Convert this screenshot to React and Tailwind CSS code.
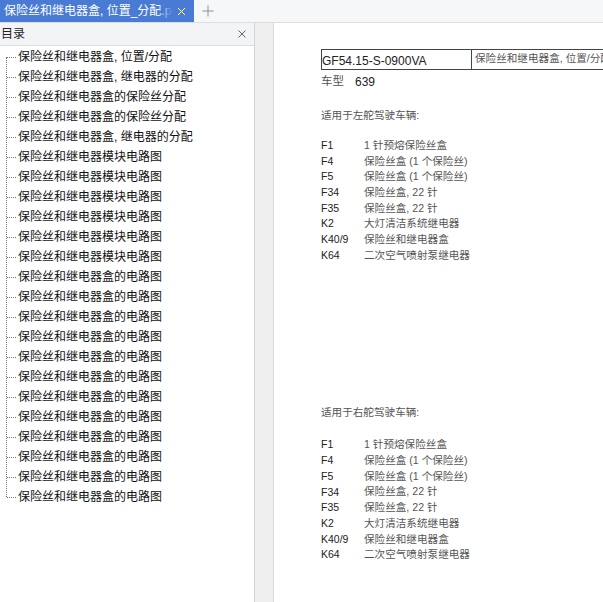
const FONT = "font-['Liberation_Sans','Noto_Sans_CJK_SC',sans-serif]";
const PAGE = "font-['Liberation_Sans','Noto_Sans_CJK_SC',serif]";

const toc = [
  "保险丝和继电器盒, 位置/分配",
  "保险丝和继电器盒, 继电器的分配",
  "保险丝和继电器盒的保险丝分配",
  "保险丝和继电器盒的保险丝分配",
  "保险丝和继电器盒, 继电器的分配",
  ...Array(6).fill("保险丝和继电器模块电路图"),
  ...Array(12).fill("保险丝和继电器盒的电路图"),
];

const rows = [
  ["F1", "1 针预熔保险丝盒"],
  ["F4", "保险丝盒 (1 个保险丝)"],
  ["F5", "保险丝盒 (1 个保险丝)"],
  ["F34", "保险丝盒, 22 针"],
  ["F35", "保险丝盒, 22 针"],
  ["K2", "大灯清洁系统继电器"],
  ["K40/9", "保险丝和继电器盒"],
  ["K64", "二次空气喷射泵继电器"],
];

function Fuses({ title, top, gap }) {
  return (
    <div className={top}>
      <div className="text-[10.6px] leading-[14px] text-[#555]">{title}</div>
      <div className={gap}>
        {rows.map(([a, b]) => (
          <div key={a} className="flex h-[15.7px] items-center">
            <span className="w-[43px] text-[10.5px] text-[#222]">{a}</span>
            <span className="text-[10.6px] text-[#555]">{b}</span>
          </div>
        ))}
      </div>
    </div>
  );
}

export default function App() {
  return (
    <div className={`flex h-[602px] w-[603px] flex-col overflow-hidden bg-white ${FONT}`}>
      <div className="flex h-[23px] shrink-0 items-stretch border-b border-[#dcdee2] bg-[#f6f7f9]">
        <div className="relative flex w-[194px] items-center overflow-hidden bg-[#4a7bd4] pl-1 text-[12px] whitespace-nowrap text-white">
          保险丝和继电器盒, 位置_分配.pdf
          <div className="absolute inset-y-0 right-0 flex w-[36px] items-center justify-end bg-gradient-to-r from-transparent to-[#4a7bd4] to-40% pr-[8px]">
            <svg width="9" height="9" viewBox="0 0 9 9" stroke="white" strokeWidth="1"><path d="M1 1l7 7M8 1l-7 7" /></svg>
          </div>
        </div>
        <div className="flex w-[27px] items-center justify-center">
          <svg width="12" height="12" viewBox="0 0 12 12" stroke="#8f8f8f" strokeWidth="1"><path d="M6 0.5v11M0.5 6h11" /></svg>
        </div>
      </div>
      <div className="flex min-h-0 flex-1">
        <aside className="flex w-[255px] shrink-0 flex-col border-r border-[#d4d4d4]">
          <div className="flex h-[23px] shrink-0 items-center justify-between border-b border-[#dcdee2] bg-[#f3f4f6] pr-[8px] pl-[1px] text-[12px] text-[#222]">
            <span>目录</span>
            <svg width="8" height="8" viewBox="0 0 8 8" stroke="#666" strokeWidth="1"><path d="M0.5 0.5l7 7M7.5 0.5l-7 7" /></svg>
          </div>
          <div className="relative pt-[1px]">
            <div className="absolute top-[11px] left-[6px] h-[440px] border-l border-dotted border-[#777]" />
            {toc.map((t, i) => (
              <div key={i} className="flex h-[20px] items-center text-[12px] whitespace-nowrap text-[#111]">
                <span className="mr-[2px] ml-[7px] w-[9px] border-t border-dotted border-[#777]" />
                {t}
              </div>
            ))}
          </div>
        </aside>
        <div className="flex-1 overflow-hidden bg-[#efefef] pl-[18px]">
          <main className={`h-full border-l border-[#dcdcdc] bg-white pt-[26px] pl-[47px] ${PAGE}`}>
            <div className="flex h-[21px] w-[300px] border border-[#444]">
              <div className="flex w-[150px] shrink-0 items-end border-r border-[#444] text-[12px] leading-[15px] text-[#222]">GF54.15-S-0900VA</div>
              <div className="overflow-hidden pl-[3px] text-[10.6px] leading-[16px] whitespace-nowrap text-[#555]">保险丝和继电器盒, 位置/分配</div>
            </div>
            <div className="mt-[3px] flex h-[18px] items-center text-[11.5px] text-[#555]">
              <span>车型</span>
              <span className="ml-[11px] text-[12px] text-[#222]">639</span>
            </div>
            <Fuses title="适用于左舵驾驶车辆:" top="mt-[17px]" gap="mt-[16px]" />
            <Fuses title="适用于右舵驾驶车辆:" top="mt-[141px]" gap="mt-[19px]" />
          </main>
        </div>
      </div>
    </div>
  );
}
